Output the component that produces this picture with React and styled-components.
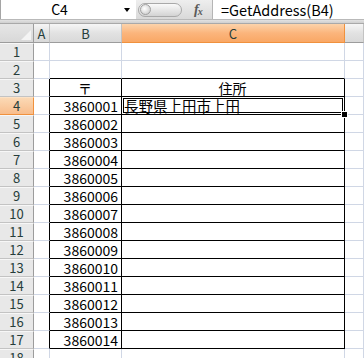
import styled, { createGlobalStyle, css } from 'styled-components';

const GRID = '#d0d7e5';
const HEAD_TEXT = '#263d3a';
const FONT = `'Noto Sans CJK JP', 'Liberation Sans', sans-serif`;

const GlobalStyle = createGlobalStyle`
  html, body {
    margin: 0;
    padding: 0;
    overflow: hidden;
    background: #fff;
  }
  body {
    font-family: ${FONT};
  }
`;

const Window = styled.div`
  width: 364px;
  height: 358px;
  overflow: hidden;
  background: #fff;
`;

const FormulaBar = styled.div`
  display: flex;
  height: 19px;
  border-bottom: 1px solid #b9b9b9;
  background: #fff;
`;

const NameBox = styled.div`
  position: relative;
  width: 136px;
  display: flex;
  align-items: center;
  justify-content: center;
  padding-right: 18px;
  box-sizing: border-box;
  border-left: 1px solid #a5a5a5;
  font-size: 14px;
  color: #000;
  line-height: 19px;
`;

const DropArrow = styled.span`
  position: absolute;
  right: 6px;
  top: 8px;
  width: 0;
  height: 0;
  border-left: 3.5px solid transparent;
  border-right: 3.5px solid transparent;
  border-top: 4px solid #000;
`;

const ToolZone = styled.div`
  width: 77px;
  display: flex;
  align-items: center;
  gap: 12px;
  padding-left: 2px;
  box-sizing: border-box;
  background: linear-gradient(#eeeeee, #d9d9d9);
  border-right: 1px solid #b5b5b5;
`;

const Pill = styled.div`
  width: 44px;
  height: 14px;
  border-radius: 8px;
  border: 1px solid #a9a9a9;
  background: linear-gradient(#fafafa, #d3d3d3);
  display: flex;
  align-items: center;
  padding-left: 1px;
  box-sizing: border-box;
`;

const Knob = styled.span`
  width: 11px;
  height: 11px;
  border-radius: 50%;
  background: radial-gradient(circle at 40% 40%, #ffffff, #c4c4c4);
  border: 1px solid #a0a0a0;
  box-sizing: border-box;
`;

const Fx = styled.span`
  font-family: 'Liberation Serif', serif;
  font-style: italic;
  font-weight: bold;
  font-size: 14px;
  color: #5a5a5a;
  letter-spacing: -1px;
  sub {
    font-size: 10px;
    vertical-align: -1px;
  }
`;

const FormulaInput = styled.div`
  flex: 1;
  padding-left: 8px;
  font-size: 14.5px;
  line-height: 19px;
  color: #000;
  white-space: nowrap;
`;

const Band = styled.div`
  height: 4px;
  background: linear-gradient(#e2e2e2, #cfcfcf);
  border-bottom: 1px solid #a9a9a9;
  box-sizing: border-box;
`;

const Sheet = styled.div`
  display: grid;
  grid-template-columns: 34px 16px 72px 223px 1fr;
  grid-template-rows: 19px;
  grid-auto-rows: 18px;
`;

const Corner = styled.div`
  position: relative;
  box-sizing: border-box;
  background: linear-gradient(#e6e6e6, #d8d8d8);
  border-right: 1px solid #9c9c9c;
  border-bottom: 1px solid #9c9c9c;
  &::after {
    content: '';
    position: absolute;
    right: 2px;
    bottom: 2px;
    width: 0;
    height: 0;
    border-left: 10px solid transparent;
    border-bottom: 10px solid #f4f4f4;
  }
`;

const ColHead = styled.div`
  box-sizing: border-box;
  display: flex;
  align-items: center;
  justify-content: center;
  font-size: 13px;
  color: ${HEAD_TEXT};
  background: linear-gradient(#f6f6f6, #e2e2e2 50%, #d9d9d9);
  border-right: 1px solid #c3c3c3;
  border-bottom: 1px solid #9c9c9c;
  ${(p) =>
    p.$active &&
    css`
      background: linear-gradient(#fcd3ab, #fbb57c 50%, #f9a765);
      border-right-color: #f0913d;
      border-bottom-color: #f0913d;
    `}
`;

const RowHead = styled.div`
  box-sizing: border-box;
  display: flex;
  align-items: center;
  justify-content: center;
  font-size: 13px;
  line-height: 16px;
  overflow: hidden;
  color: ${HEAD_TEXT};
  background: #e8e8e8;
  border-top: 1px solid #f7f7f7;
  border-right: 1px solid #9c9c9c;
  border-bottom: 1px solid #c3c3c3;
  ${(p) =>
    p.$active &&
    css`
      background: linear-gradient(#fbd9b5, #f8bd8c);
      border-top-color: #fce2c6;
      border-right-color: #f0913d;
      border-bottom-color: #f0913d;
    `}
`;

const Cell = styled.div`
  position: relative;
  box-sizing: border-box;
  display: flex;
  align-items: center;
  justify-content: ${(p) => p.$align || 'flex-start'};
  padding: 0 3px 0 2px;
  font-size: 14px;
  line-height: 16px;
  color: #000;
  white-space: nowrap;
  border-right: 1px solid ${(p) => (p.$edgeRight ? '#000' : GRID)};
  border-bottom: 1px solid ${(p) => (p.$edgeBottom ? '#000' : GRID)};
  ${(p) =>
    p.$selected &&
    css`
      font-size: 14.5px;
      box-shadow: inset 0 0 0 1px #fff, inset 0 0 0 2px #000;
    `}
`;

const FillHandle = styled.span`
  position: absolute;
  right: -3px;
  bottom: -3px;
  width: 5px;
  height: 5px;
  background: #000;
  outline: 1px solid #fff;
  z-index: 2;
`;

const COLUMNS = ['A', 'B', 'C', 'D'];
const ROWS = 18;
const FIRST = 3;
const LAST = 17;

const value = (row, col) => {
  if (row === 3 && col === 'B') return '〒';
  if (row === 3 && col === 'C') return '住所';
  if (col === 'B' && row >= 4 && row <= LAST) return String(3860000 + row - 3);
  if (row === 4 && col === 'C') return '長野県上田市上田';
  return '';
};

const inTable = (row, col) => (col === 'B' || col === 'C') && row >= FIRST && row <= LAST;

export default function App() {
  const rows = Array.from({ length: ROWS }, (_, i) => i + 1);

  return (
    <Window>
      <GlobalStyle />
      <FormulaBar>
        <NameBox>
          C4
          <DropArrow />
        </NameBox>
        <ToolZone>
          <Pill>
            <Knob />
          </Pill>
          <Fx>
            f<sub>x</sub>
          </Fx>
        </ToolZone>
        <FormulaInput>=GetAddress(B4)</FormulaInput>
      </FormulaBar>
      <Band />
      <Sheet>
        <Corner />
        {COLUMNS.map((c) => (
          <ColHead key={c} $active={c === 'C'}>
            {c === 'D' ? '' : c}
          </ColHead>
        ))}
        {rows.map((r) => [
          <RowHead key={`h${r}`} $active={r === 4}>
            {r}
          </RowHead>,
          ...COLUMNS.map((c) => {
            const next = COLUMNS[COLUMNS.indexOf(c) + 1];
            const edgeRight = inTable(r, c) || (next && inTable(r, next));
            const edgeBottom = inTable(r, c) || inTable(r + 1, c);
            const selected = r === 4 && c === 'C';
            const align = c === 'B' && r > 3 ? 'flex-end' : r === 3 ? 'center' : 'flex-start';
            return (
              <Cell
                key={`${c}${r}`}
                $edgeRight={edgeRight}
                $edgeBottom={edgeBottom}
                $selected={selected}
                $align={align}
              >
                {value(r, c)}
                {selected && <FillHandle />}
              </Cell>
            );
          }),
        ])}
      </Sheet>
    </Window>
  );
}
